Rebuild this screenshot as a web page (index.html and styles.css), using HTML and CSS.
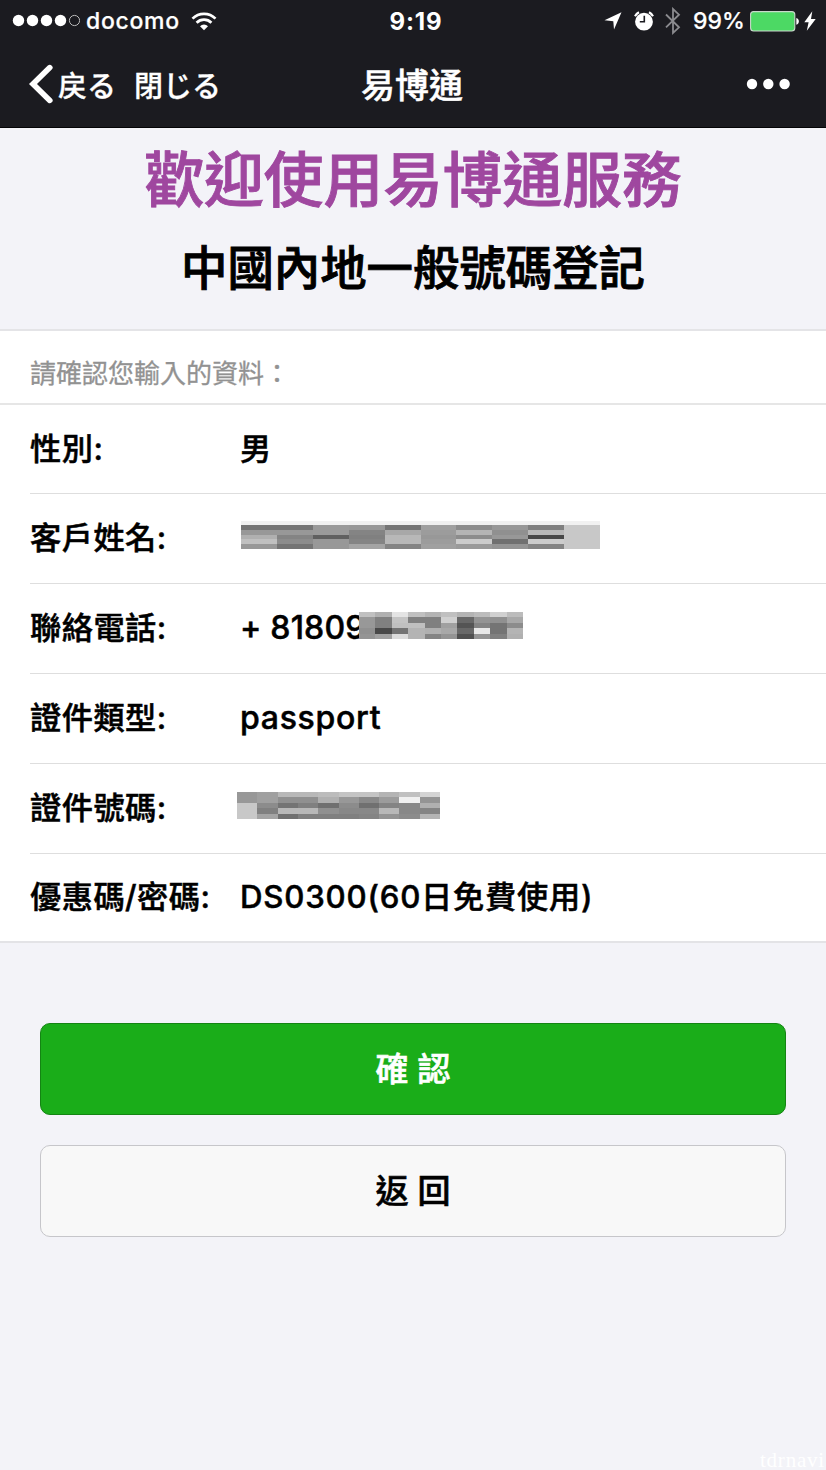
FILE: index.html
```html
<!DOCTYPE html>
<html lang="zh-Hant">
<head>
<meta charset="utf-8">
<title>易博通</title>
<link rel="stylesheet" href="styles.css">
</head>
<body>
<header class="top">
  <div class="status">
    <div class="status-left">
      <svg class="signal" width="68" height="14" viewBox="0 0 68 14" fill="#fff"><circle cx="6.5" cy="6.5" r="5.7"/><circle cx="20.5" cy="6.5" r="5.7"/><circle cx="34.5" cy="6.5" r="5.7"/><circle cx="48.5" cy="6.5" r="5.7"/><circle cx="62.5" cy="6.5" r="5.1" fill="none" stroke="#bbb" stroke-width="1"/></svg>
      <span class="carrier">docomo</span>
      <svg class="wifi" width="26" height="19" viewBox="0 0 26 19" fill="none" stroke="#fff" stroke-width="2.7"><path d="M1.5 6.6a16.2 16.2 0 0 1 23 0"/><path d="M5.6 10.8a10.4 10.4 0 0 1 14.8 0"/><path d="M13 18.2L9 14.2a5.7 5.7 0 0 1 8 0z" fill="#fff" stroke="none"/></svg>
    </div>
    <span class="clock">9:19</span>
    <div class="status-right">
      <svg class="arrow" width="18" height="18" viewBox="0 0 18 18" fill="#fff"><path d="M17.5.3L10 17.5l-.7-8.3L.5 8.2z"/></svg>
      <svg class="alarm" width="20" height="20" viewBox="0 0 20 20"><circle cx="10" cy="10.7" r="8.9" fill="#fff"/><path d="M1 5.2A11 11 0 0 1 5 1.3M15 1.3a11 11 0 0 1 4 3.9" fill="none" stroke="#fff" stroke-width="2.2"/><path d="M10.3 4.8v6H5.8" fill="none" stroke="#1b1b20" stroke-width="1.6"/></svg>
      <svg class="bt" width="16" height="28" viewBox="0 0 16 28" fill="none" stroke="#8b8b8f" stroke-width="1.8"><path d="M1 7.5l13 12.8-6 5.6V2l6 5.7L1 20.3"/></svg>
      <span class="percent">99%</span>
      <svg class="battery" width="50" height="21" viewBox="0 0 50 21"><rect x=".6" y=".6" width="44.2" height="19.4" rx="3" fill="#4cd964" stroke="#c9d8cb" stroke-width="1.1"/><path d="M46.3 6.9c3.4.8 3.4 6 0 6.8z" fill="#fff"/></svg>
      <svg class="bolt" width="12" height="20" viewBox="0 0 12 20" fill="#fff"><path d="M8.3.3L.3 11.2h4.3L2.8 19.8 11.7 8H7z"/></svg>
    </div>
  </div>
  <nav class="nav">
    <div class="nav-left">
      <svg class="back" width="25" height="40" viewBox="0 0 25 40" fill="none" stroke="#fff" stroke-width="5.6" stroke-linecap="round" stroke-linejoin="miter"><path d="M21.8 3.6L5 20l16.8 16.4"/></svg>
      <span class="nav-link">戻る</span>
      <span class="nav-link close">閉じる</span>
    </div>
    <span class="nav-title">易博通</span>
    <svg class="more" width="44" height="12" viewBox="0 0 44 12" fill="#fff"><circle cx="6" cy="6" r="5.2"/><circle cx="22.3" cy="6" r="5.2"/><circle cx="38.6" cy="6" r="5.2"/></svg>
  </nav>
</header>
<main class="page">
  <h1 class="title">歡迎使用易博通服務</h1>
  <h2 class="subtitle">中國內地一般號碼登記</h2>
  <section class="card">
    <p class="hint">請確認您輸入的資料：</p>
    <div class="rows">
      <div class="row"><span class="label">性別:</span><span class="value">男</span></div>
      <div class="row"><span class="label">客戶姓名:</span><span class="value"><svg class="mosaic name" viewBox="0 0 10 5" preserveAspectRatio="none"></svg></span></div>
      <div class="row"><span class="label">聯絡電話:</span><span class="value"><span class="number">+ 81809</span><svg class="mosaic phone" viewBox="0 0 10 5" preserveAspectRatio="none"></svg></span></div>
      <div class="row"><span class="label">證件類型:</span><span class="value latin">passport</span></div>
      <div class="row"><span class="label">證件號碼:</span><span class="value"><svg class="mosaic doc" viewBox="0 0 10 5" preserveAspectRatio="none"></svg></span></div>
      <div class="row"><span class="label">優惠碼/密碼:</span><span class="value promo">DS0300(60日免費使用)</span></div>
    </div>
  </section>
  <div class="actions">
    <button class="btn primary">確 認</button>
    <button class="btn plain">返 回</button>
  </div>
  <span class="mark">tdrnavi</span>
</main>
<script src="mosaic.js"></script>
</body>
</html>
```
FILE: styles.css
```css
* { box-sizing: border-box; }
body {
  margin: 0;
  width: 826px;
  height: 1470px;
  overflow: hidden;
  display: flex;
  flex-direction: column;
  background: #f3f3f8;
  color: #000;
  font-family: Inter, "Noto Sans CJK TC", sans-serif;
}
svg { display: block; flex: none; }
.top {
  height: 128px;
  flex: none;
  background: #1b1b20;
  border-bottom: 1px solid #040406;
  color: #fff;
}
.status {
  height: 41px;
  display: grid;
  grid-template-columns: 1fr auto 1fr;
  align-items: center;
  padding: 0 10px 0 12px;
  font-size: 23px;
  font-weight: 500;
  line-height: 41px;
}
.status-left, .status-right { display: flex; align-items: center; }
.status-right { justify-content: flex-end; }
.carrier { margin-left: 6px; width: 94px; letter-spacing: .7px; white-space: nowrap; padding-top: 1px; -webkit-text-stroke: .2px; }
.wifi { margin-left: 11px; }
.clock { font-size: 24px; font-weight: 700; letter-spacing: .9px; padding-top: 1px; position: relative; left: 2px; }
.arrow { margin-right: 12px; }
.bt { margin-left: 11px; }
.percent { margin-left: 12px; margin-right: 7px; width: 50px; white-space: nowrap; padding-top: 1px; -webkit-text-stroke: .2px; }
.bolt { margin-left: 4px; }
.nav {
  height: 86px;
  display: grid;
  grid-template-columns: 1fr auto 1fr;
  align-items: center;
  padding: 0 36px 0 28px;
}
.nav-left { display: flex; align-items: center; }
.nav-link { font: 500 29px/44px "Noto Sans CJK JP", sans-serif; margin-left: 5px; -webkit-text-stroke: .3px; }
.close { margin-left: 18px; }
.nav-title { font-size: 34px; font-weight: 500; line-height: 44px; padding-top: 4px; position: relative; left: 3px; -webkit-text-stroke: .5px; }
.more { justify-self: end; }
.page { flex: 1; display: flex; flex-direction: column; position: relative; }
.title {
  margin: 12px 0 0;
  text-align: center;
  font-size: 59.7px;
  line-height: 80px;
  font-weight: 500;
  color: #9f479f;
  -webkit-text-stroke: .9px;
}
.subtitle {
  margin: 16px 0 0;
  text-align: center;
  font-size: 46.4px;
  line-height: 64px;
  font-weight: 500;
  -webkit-text-stroke: .9px;
}
.card { margin-top: 29px; background: #fff; border-top: 2px solid #e4e4e7; border-bottom: 2px solid #e3e3e6; }
.hint {
  margin: 0;
  height: 74px;
  padding: 11px 30px 0;
  border-bottom: 2px solid #e6e6e6;
  font-size: 26px;
  line-height: 64px;
  color: #929292;
  -webkit-text-stroke: .3px;
}
.rows { padding-left: 30px; }
.row {
  height: 90px;
  display: flex;
  align-items: center;
  padding-bottom: 1px;
  border-bottom: 1px solid #dedede;
  font-size: 31.2px;
  font-weight: 500;
  line-height: 44px;
  -webkit-text-stroke: .5px;
}
.row:first-child { height: 89px; }
.row:last-child { border-bottom: 0; height: 87px; }
.label { width: 210px; flex: none; white-space: nowrap; letter-spacing: .5px; }
.value { display: flex; align-items: center; white-space: nowrap; }
.number { width: 119px; flex: none; letter-spacing: .2px; font-size: 32px; }
.latin { font-size: 32px; letter-spacing: .7px; }
.promo { letter-spacing: .8px; }
.mosaic { position: relative; }
.name { width: 359px; height: 24px; margin: 0 0 3px 1px; box-shadow: 0 -4px #f1f1f1; }
.phone { width: 164px; height: 27px; margin-bottom: 6px; }
.doc { width: 203px; height: 27px; margin: 0 0 6px -3px; }
.actions { display: flex; flex-direction: column; gap: 30px; padding: 80px 40px 0; }
.btn {
  height: 92px;
  padding: 0 0 1px;
  border-radius: 10px;
  border: 1px solid #c6c6ca;
  background: #f8f8f8;
  color: #000;
  font: 500 33px/44px Inter, "Noto Sans CJK TC", sans-serif;
  -webkit-text-stroke: .6px;
}
.primary { background: #1aad19; border-color: #148413; color: #fff; }
.mark {
  position: absolute;
  right: 1px;
  bottom: 0;
  color: #fff;
  font: 21px/19px "Liberation Serif", serif;
  letter-spacing: .8px;
}
```
FILE: mosaic.js
```javascript
// Grey levels of each redaction block, one string per row of cells.
const blocks = {
  name: ["75 75 9a 98 75 a0 8c 98 80 c8", "98 98 9a 84 a8 9c b4 90 b8 c8", "b0 84 60 80 b8 98 8c 98 48 c8", "c0 8c 98 84 b8 9c cc 70 cc c8", "98 74 98 a4 84 a0 9a 94 84 c8"],
  phone: ["c0 b0 e4 c0 b4 c0 b4 bc d0 bc", "98 80 c4 80 80 d0 68 94 90 a8", "98 80 c0 c0 80 a0 54 84 74 8c", "90 48 74 b4 b0 a8 68 e8 74 b4", "94 a0 dc b4 84 94 50 94 80 b0"],
  doc: ["98 a0 b8 b8 bc c4 c4 b4 c0 d4", "98 a0 90 90 b0 98 88 9c f0 94", "c8 8c 74 80 70 8c 70 84 88 b0", "c8 80 b8 b8 90 88 88 b8 88 84", "c8 a4 70 80 80 80 84 94 8c b4"]
};
for (const [name, rows] of Object.entries(blocks)) {
  const svg = document.querySelector(".mosaic." + name);
  svg.innerHTML = rows.map((row, y) => row.split(" ").map((g, x) =>
    `<rect x="${x}" y="${y}" width="1" height="1" fill="#${g}${g}${g}" shape-rendering="crispEdges"/>`).join("")).join("");
}
```
